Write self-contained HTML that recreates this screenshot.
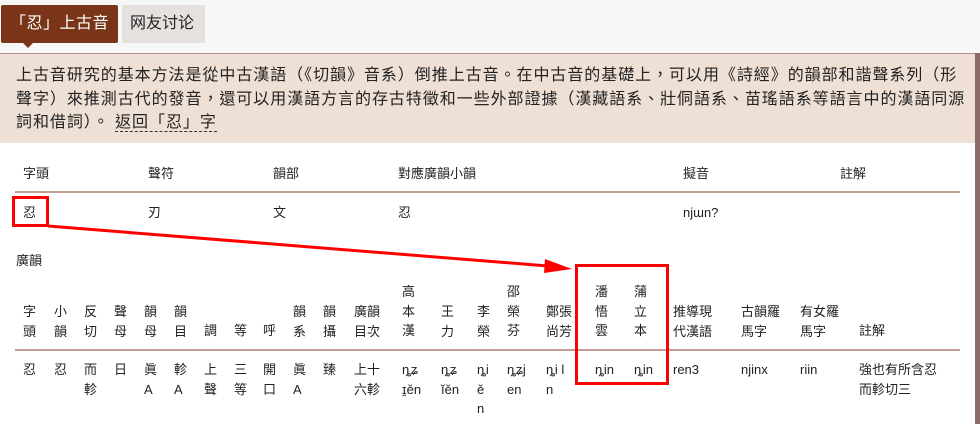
<!DOCTYPE html>
<html><head><meta charset="utf-8"><style>
*{margin:0;padding:0;box-sizing:border-box}
body{width:980px;height:424px;overflow:hidden;background:#fff;font-family:"Liberation Sans","Noto Sans CJK TC",sans-serif;color:#222;position:relative}
.a{position:absolute;white-space:nowrap}
.t{font-size:13px;line-height:20px}
.h{font-size:13px;line-height:19.5px}
</style></head><body>
<div class="a" style="left:0;top:0;width:980px;height:53px;background:#f7f7f7"></div>
<div class="a" style="left:1px;top:5px;width:117px;height:38px;background:#7a3418;border-radius:2px;color:#fff;font-size:16px;line-height:38px;padding-left:9px;letter-spacing:0.5px">「忍」上古音</div>
<div class="a" style="left:23px;top:43px;width:0;height:0;border-left:5px solid transparent;border-right:5px solid transparent;border-top:5px solid #7a3418"></div>
<div class="a" style="left:122px;top:5px;width:83px;height:38px;background:#e6e1df;border-radius:2px;color:#222;font-size:16px;line-height:38px;padding-left:8px">网友讨论</div>
<div class="a" style="left:0;top:53px;width:980px;height:1px;background:#b09088"></div>
<div class="a" style="left:975px;top:53px;width:5px;height:371px;background:#8c6a6a"></div>
<div class="a" style="left:0;top:54px;width:975px;height:89px;background:#efe0d6"></div>
<div class="a" style="left:16px;top:64px;font-size:16px;line-height:23.5px;color:#222;letter-spacing:0.95px">上古音研究的基本方法是從中古漢語（《切韻》音系）倒推上古音。在中古音的基礎上，可以用《詩經》的韻部和諧聲系列（形<br>聲字）來推測古代的發音，還可以用漢語方言的存古特徵和一些外部證據（漢藏語系、壯侗語系、苗瑤語系等語言中的漢語同源<br>詞和借詞）。 <span style="border-bottom:1px dashed #333">返回「忍」字</span></div>

<div class="a t" style="left:23px;top:164px">字頭</div>
<div class="a t" style="left:148px;top:164px">聲符</div>
<div class="a t" style="left:273px;top:164px">韻部</div>
<div class="a t" style="left:398px;top:164px">對應廣韻小韻</div>
<div class="a t" style="left:683px;top:164px">擬音</div>
<div class="a t" style="left:840px;top:164px">註解</div>
<div class="a" style="left:15px;top:191px;width:945px;height:2px;background:#c49d94"></div>
<div class="a t" style="left:23px;top:203px">忍</div>
<div class="a t" style="left:148px;top:203px">刃</div>
<div class="a t" style="left:273px;top:203px">文</div>
<div class="a t" style="left:398px;top:203px">忍</div>
<div class="a t" style="left:683px;top:203px">njɯn?</div>

<div class="a t" style="left:16px;top:251px">廣韻</div>

<div class="a h" style="left:23px;top:302px">字<br>頭</div>
<div class="a h" style="left:54px;top:302px">小<br>韻</div>
<div class="a h" style="left:84px;top:302px">反<br>切</div>
<div class="a h" style="left:114px;top:302px">聲<br>母</div>
<div class="a h" style="left:144px;top:302px">韻<br>母</div>
<div class="a h" style="left:174px;top:302px">韻<br>目</div>
<div class="a h" style="left:204px;top:321px">調</div>
<div class="a h" style="left:234px;top:321px">等</div>
<div class="a h" style="left:263px;top:321px">呼</div>
<div class="a h" style="left:293px;top:302px">韻<br>系</div>
<div class="a h" style="left:323px;top:302px">韻<br>攝</div>
<div class="a h" style="left:354px;top:302px">廣韻<br>目次</div>
<div class="a h" style="left:402px;top:282px">高<br>本<br>漢</div>
<div class="a h" style="left:441px;top:302px">王<br>力</div>
<div class="a h" style="left:477px;top:302px">李<br>榮</div>
<div class="a h" style="left:507px;top:282px">邵<br>榮<br>芬</div>
<div class="a h" style="left:546px;top:302px">鄭張<br>尚芳</div>
<div class="a h" style="left:595px;top:282px">潘<br>悟<br>雲</div>
<div class="a h" style="left:634px;top:282px">蒲<br>立<br>本</div>
<div class="a h" style="left:673px;top:302px">推導現<br>代漢語</div>
<div class="a h" style="left:741px;top:302px">古韻羅<br>馬字</div>
<div class="a h" style="left:800px;top:302px">有女羅<br>馬字</div>
<div class="a h" style="left:859px;top:321px">註解</div>
<div class="a" style="left:15px;top:349px;width:945px;height:2px;background:#c49d94"></div>

<div class="a h" style="left:23px;top:360px">忍</div>
<div class="a h" style="left:54px;top:360px">忍</div>
<div class="a h" style="left:84px;top:360px">而<br>軫</div>
<div class="a h" style="left:114px;top:360px">日</div>
<div class="a h" style="left:144px;top:360px">眞<br>A</div>
<div class="a h" style="left:174px;top:360px">軫<br>A</div>
<div class="a h" style="left:204px;top:360px">上<br>聲</div>
<div class="a h" style="left:234px;top:360px">三<br>等</div>
<div class="a h" style="left:263px;top:360px">開<br>口</div>
<div class="a h" style="left:293px;top:360px">眞<br>A</div>
<div class="a h" style="left:323px;top:360px">臻</div>
<div class="a h" style="left:354px;top:360px">上十<br>六軫</div>
<div class="a h" style="left:402px;top:360px">ȵʑ<br>ɪ̯ěn</div>
<div class="a h" style="left:441px;top:360px">ȵʑ<br>ĭěn</div>
<div class="a h" style="left:477px;top:360px">ȵi<br>ě<br>n</div>
<div class="a h" style="left:507px;top:360px">ȵʑj<br>en</div>
<div class="a h" style="left:546px;top:360px">ȵi l<br>n</div>
<div class="a h" style="left:595px;top:360px">ȵin</div>
<div class="a h" style="left:634px;top:360px">ȵin</div>
<div class="a h" style="left:673px;top:360px">ren3</div>
<div class="a h" style="left:741px;top:360px">njinx</div>
<div class="a h" style="left:800px;top:360px">riin</div>
<div class="a h" style="left:859px;top:360px">強也有所含忍<br>而軫切三</div>

<div class="a" style="left:12px;top:196px;width:37px;height:31px;border:3px solid #f00"></div>
<div class="a" style="left:575px;top:264px;width:94px;height:121px;border:3px solid #f00"></div>
<svg class="a" style="left:0;top:0" width="980" height="424"><line x1="48" y1="226" x2="548" y2="266" stroke="#f00" stroke-width="3"/><polygon points="572,269 545,259 544,273" fill="#f00"/></svg>
</body></html>
